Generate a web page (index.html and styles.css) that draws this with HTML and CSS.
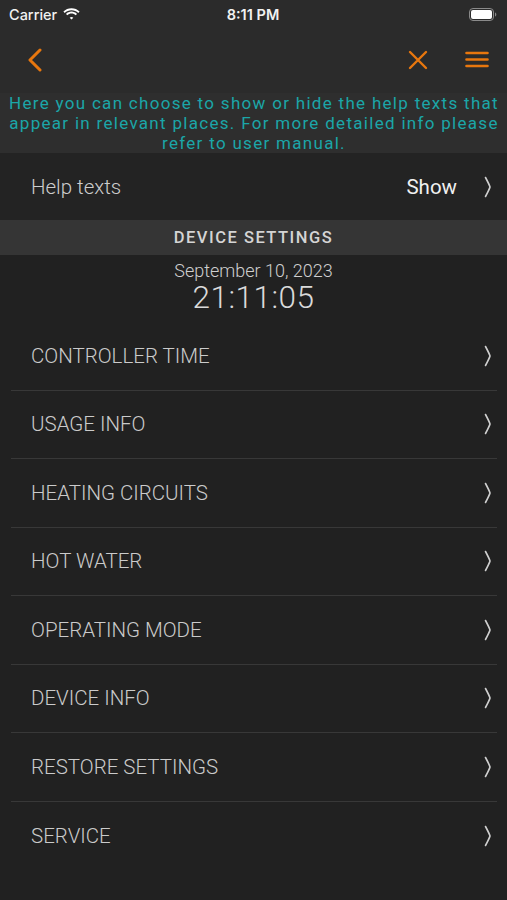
FILE: index.html
```html
<!DOCTYPE html>
<html>
<head>
<meta charset="utf-8">
<link rel="stylesheet" href="styles.css">
</head>
<body>
<div class="top">
  <div class="status">
    <div class="st-left">Carrier
      <svg class="wifi" width="17" height="12" viewBox="0 0 17 12"><path d="M8.5 2.2c2.6 0 5 1 6.8 2.7l1.3-1.4C14.5 1.4 11.6.2 8.5.2S2.5 1.4.4 3.5l1.3 1.4C3.5 3.2 5.9 2.2 8.5 2.2z M8.5 5.6c1.6 0 3.1.6 4.2 1.7l1.3-1.4C12.6 4.5 10.6 3.6 8.5 3.6S4.4 4.5 3 5.9l1.3 1.4c1.1-1.1 2.6-1.700 4.2-1.7z M8.5 9c.7 0 1.3.3 1.8.7l-1.8 1.9-1.8-1.9C7.2 9.3 7.8 9 8.5 9z" fill="#fff"/></svg>
    </div>
    <div class="st-time">8:11 PM</div>
    <div class="st-right">
      <svg width="28" height="13" viewBox="0 0 28 13"><rect x="0.5" y="0.5" width="24" height="12" rx="3.5" fill="none" stroke="#8a8a8a"/><rect x="2" y="2" width="21" height="9" rx="2" fill="#fff"/><path d="M26 4.5v4c.8-.3 1.3-1.1 1.3-2s-.5-1.7-1.3-2z" fill="#8a8a8a"/></svg>
    </div>
  </div>
  <div class="nav">
    <svg class="back" width="16" height="24" viewBox="0 0 16 24"><path d="M13 2 L3 12 L13 22" fill="none" stroke="#e8770e" stroke-width="3" stroke-linecap="round" stroke-linejoin="round"/></svg>
    <div class="spacer"></div>
    <svg class="close" width="20" height="20" viewBox="0 0 20 20"><path d="M2 2 L18 18 M18 2 L2 18" stroke="#e8770e" stroke-width="2.4" stroke-linecap="round"/></svg>
    <svg class="menu" width="24" height="17" viewBox="0 0 24 17"><path d="M1.5 2 H22.5 M1.5 8.5 H22.5 M1.5 15 H22.5" stroke="#e8770e" stroke-width="2.6" stroke-linecap="round"/></svg>
  </div>
</div>
<div class="help">Here you can choose to show or hide the help texts that appear in relevant places. For more detailed info please refer to user manual.</div>
<div class="help-row">
  <span class="label">Help texts</span>
  <span class="value">Show</span>
  <svg class="chev" width="8" height="22" viewBox="0 0 8 22"><path d="M1.5 1.5 Q5.5 9 6 11 Q5.5 13 1.5 20.5" fill="none" stroke="#d0d0d0" stroke-width="1.6" stroke-linecap="round"/></svg>
</div>
<div class="section">DEVICE SETTINGS</div>
<div class="clock">
  <div class="date">September 10, 2023</div>
  <div class="time">21:11:05</div>
</div>
<div class="list">
  <div class="row"><span class="label">CONTROLLER TIME</span><svg class="chev" width="8" height="22" viewBox="0 0 8 22"><path d="M1.5 1.5 Q5.5 9 6 11 Q5.5 13 1.5 20.5" fill="none" stroke="#d0d0d0" stroke-width="1.6" stroke-linecap="round"/></svg></div>
  <div class="row"><span class="label">USAGE INFO</span><svg class="chev" width="8" height="22" viewBox="0 0 8 22"><path d="M1.5 1.5 Q5.5 9 6 11 Q5.5 13 1.5 20.5" fill="none" stroke="#d0d0d0" stroke-width="1.6" stroke-linecap="round"/></svg></div>
  <div class="row"><span class="label">HEATING CIRCUITS</span><svg class="chev" width="8" height="22" viewBox="0 0 8 22"><path d="M1.5 1.5 Q5.5 9 6 11 Q5.5 13 1.5 20.5" fill="none" stroke="#d0d0d0" stroke-width="1.6" stroke-linecap="round"/></svg></div>
  <div class="row"><span class="label">HOT WATER</span><svg class="chev" width="8" height="22" viewBox="0 0 8 22"><path d="M1.5 1.5 Q5.5 9 6 11 Q5.5 13 1.5 20.5" fill="none" stroke="#d0d0d0" stroke-width="1.6" stroke-linecap="round"/></svg></div>
  <div class="row"><span class="label">OPERATING MODE</span><svg class="chev" width="8" height="22" viewBox="0 0 8 22"><path d="M1.5 1.5 Q5.5 9 6 11 Q5.5 13 1.5 20.5" fill="none" stroke="#d0d0d0" stroke-width="1.6" stroke-linecap="round"/></svg></div>
  <div class="row"><span class="label">DEVICE INFO</span><svg class="chev" width="8" height="22" viewBox="0 0 8 22"><path d="M1.5 1.5 Q5.5 9 6 11 Q5.5 13 1.5 20.5" fill="none" stroke="#d0d0d0" stroke-width="1.6" stroke-linecap="round"/></svg></div>
  <div class="row"><span class="label">RESTORE SETTINGS</span><svg class="chev" width="8" height="22" viewBox="0 0 8 22"><path d="M1.5 1.5 Q5.5 9 6 11 Q5.5 13 1.5 20.5" fill="none" stroke="#d0d0d0" stroke-width="1.6" stroke-linecap="round"/></svg></div>
  <div class="row"><span class="label">SERVICE</span><svg class="chev" width="8" height="22" viewBox="0 0 8 22"><path d="M1.5 1.5 Q5.5 9 6 11 Q5.5 13 1.5 20.5" fill="none" stroke="#d0d0d0" stroke-width="1.6" stroke-linecap="round"/></svg></div>
</div>
</body>
</html>
```
FILE: styles.css
```css
* { box-sizing: border-box; }
html, body { margin: 0; padding: 0; }
body {
  width: 507px;
  height: 900px;
  overflow: hidden;
  background: #212121;
  font-family: Roboto, "Liberation Sans", sans-serif;
  color: #cfcfcf;
}
.top { background: #2b2b2b; }
.status {
  height: 28px;
  display: flex;
  align-items: center;
  padding: 0 9px;
  color: #f2f2f2;
  font-family: Inter, "Liberation Sans", sans-serif;
  font-size: 14.5px;
  font-weight: 500;
}
.st-left { flex: 1; display: flex; align-items: center; gap: 6px; }
.st-time { flex: 0 0 auto; font-weight: 600; }
.st-right { flex: 1; display: flex; justify-content: flex-end; padding-right: 1px; }
.nav {
  height: 65px;
  display: flex;
  align-items: center;
  padding: 0 18px 2px 27px;
}
.spacer { flex: 1; }
.close { margin-right: 37px; }
.help {
  background: #2e2e2e;
  color: #1ba6a8;
  font-size: 17px;
  letter-spacing: 1.3px;
  line-height: 20px;
  text-align: center;
  padding: 0 4px 0 5px;
  height: 60px;
}
.help-row {
  height: 67px;
  display: flex;
  align-items: center;
  padding: 0 15px 0 31px;
  background: #232323;
  font-size: 20.5px;
  font-weight: 300;
  color: #cdcdcd;
}
.help-row .label { flex: 1; }
.help-row .value { color: #f0f0f0; font-weight: 400; margin-right: 27px; }
.chev { flex: 0 0 auto; display: block; }
.section {
  height: 35px;
  background: #353535;
  display: flex;
  align-items: center;
  justify-content: center;
  font-size: 16.5px;
  letter-spacing: 1.5px;
  font-weight: 500;
  color: #d4d4d4;
}
.clock {
  text-align: center;
  padding-top: 5px;
  height: 67px;
}
.date { font-size: 18px; line-height: 21px; font-weight: 300; color: #cfcfcf; }
.time { font-size: 31.5px; line-height: 34px; font-weight: 300; color: #dadada; letter-spacing: 0.5px; }
.list { padding: 0 10px 0 11px; }
.row {
  height: 68.5px;
  display: flex;
  align-items: center;
  padding: 0 5px 0 20px;
  border-bottom: 1.5px solid #383838;
  font-size: 20.5px;
  font-weight: 300;
  color: #cbcbcb;
}
.row:last-child { border-bottom: none; }
.row .label { flex: 1; }
```
